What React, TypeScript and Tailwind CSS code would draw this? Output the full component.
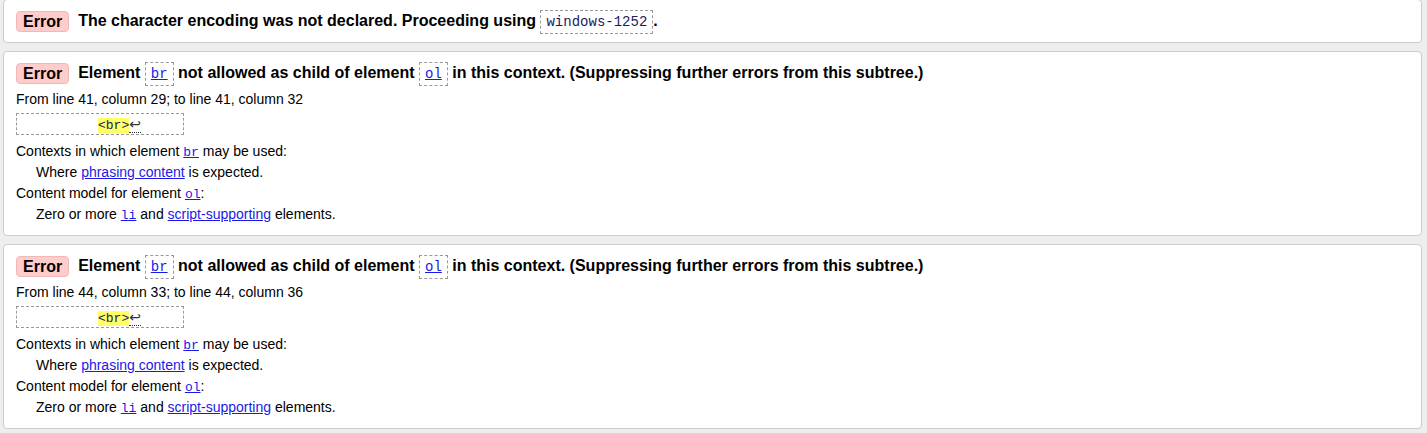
import React from "react";

const sans = { fontFamily: '"Liberation Sans", Arial, sans-serif' };
const mono = '[font-family:"Liberation_Mono",monospace]';

function Badge() {
  return (
    <span className="inline-block rounded-[4px] border border-[#f2b8b8] bg-[#ffcccc] px-[6px] leading-[19px] text-[16px] font-bold text-black mr-[9px]">
      Error
    </span>
  );
}

function Code({ children, link = false }: { children: React.ReactNode; link?: boolean }) {
  return (
    <span
      className={`inline-block border border-dashed border-[#999] px-[5px] leading-[22px] text-[14px] font-normal ${mono} ${
        link ? "text-[#1a1ae6] underline" : "text-[#1c1c5c]"
      }`}
    >
      {children}
    </span>
  );
}

function L({ children, mono: m = false }: { children: React.ReactNode; mono?: boolean }) {
  return (
    <span className={`text-[#1a1ae6] underline ${m ? mono + " text-[13px] leading-[14px]" : ""}`}>{children}</span>
  );
}

function ErrorCard({ from }: { from: string }) {
  return (
    <div className="rounded-[4px] border border-[#cccccc] bg-white px-[12px] pt-[9px] pb-[10px]">
      <div className="flex items-center leading-[24px] text-[16px] font-bold text-black">
        <Badge />
        <span>
          Element <Code link>br</Code> not allowed as child of element <Code link>ol</Code> in this context.
          (Suppressing further errors from this subtree.)
        </span>
      </div>
      <div className="mt-[3px] h-[20px] text-[14px] leading-[20px] text-black">{from}</div>
      <div
        className={`mt-[4px] h-[22px] w-[168px] border border-dashed border-[#999] pl-[81px] leading-[20px] text-[13px] ${mono} text-[#333]`}
      >
        <span className="bg-[#ffff66] text-[#1c1c5c]">&lt;br&gt;</span>
        <span className="border-b border-dotted border-[#333] text-[14px] text-[#333] [font-family:'DejaVu_Sans',sans-serif]">↩</span>
      </div>
      <div className="mt-[6px] text-[14px] leading-[21px] text-black">
        <div className="h-[21px]">
          Contexts in which element <L mono>br</L> may be used:
        </div>
        <div className="h-[21px] pl-[20px]">
          Where <L>phrasing content</L> is expected.
        </div>
        <div className="h-[21px]">
          Content model for element <L mono>ol</L>:
        </div>
        <div className="h-[21px] pl-[20px]">
          Zero or more <L mono>li</L> and <L>script-supporting</L> elements.
        </div>
      </div>
    </div>
  );
}

export default function App() {
  return (
    <div className="min-h-[433px] bg-[#eeeeee] pl-[3px] pr-[5px] pb-[5px]" style={sans}>
      <div className="flex flex-col gap-[8px]">
        <div className="-mt-[1px] rounded-[4px] border border-[#cccccc] bg-white px-[12px] pt-[9px] pb-[8px]">
          <div className="flex items-center leading-[24px] text-[16px] font-bold text-black">
            <Badge />
            <span>
              The character encoding was not declared. Proceeding using <Code>windows-1252</Code>.
            </span>
          </div>
        </div>
        <ErrorCard from="From line 41, column 29; to line 41, column 32" />
        <ErrorCard from="From line 44, column 33; to line 44, column 36" />
      </div>
    </div>
  );
}
